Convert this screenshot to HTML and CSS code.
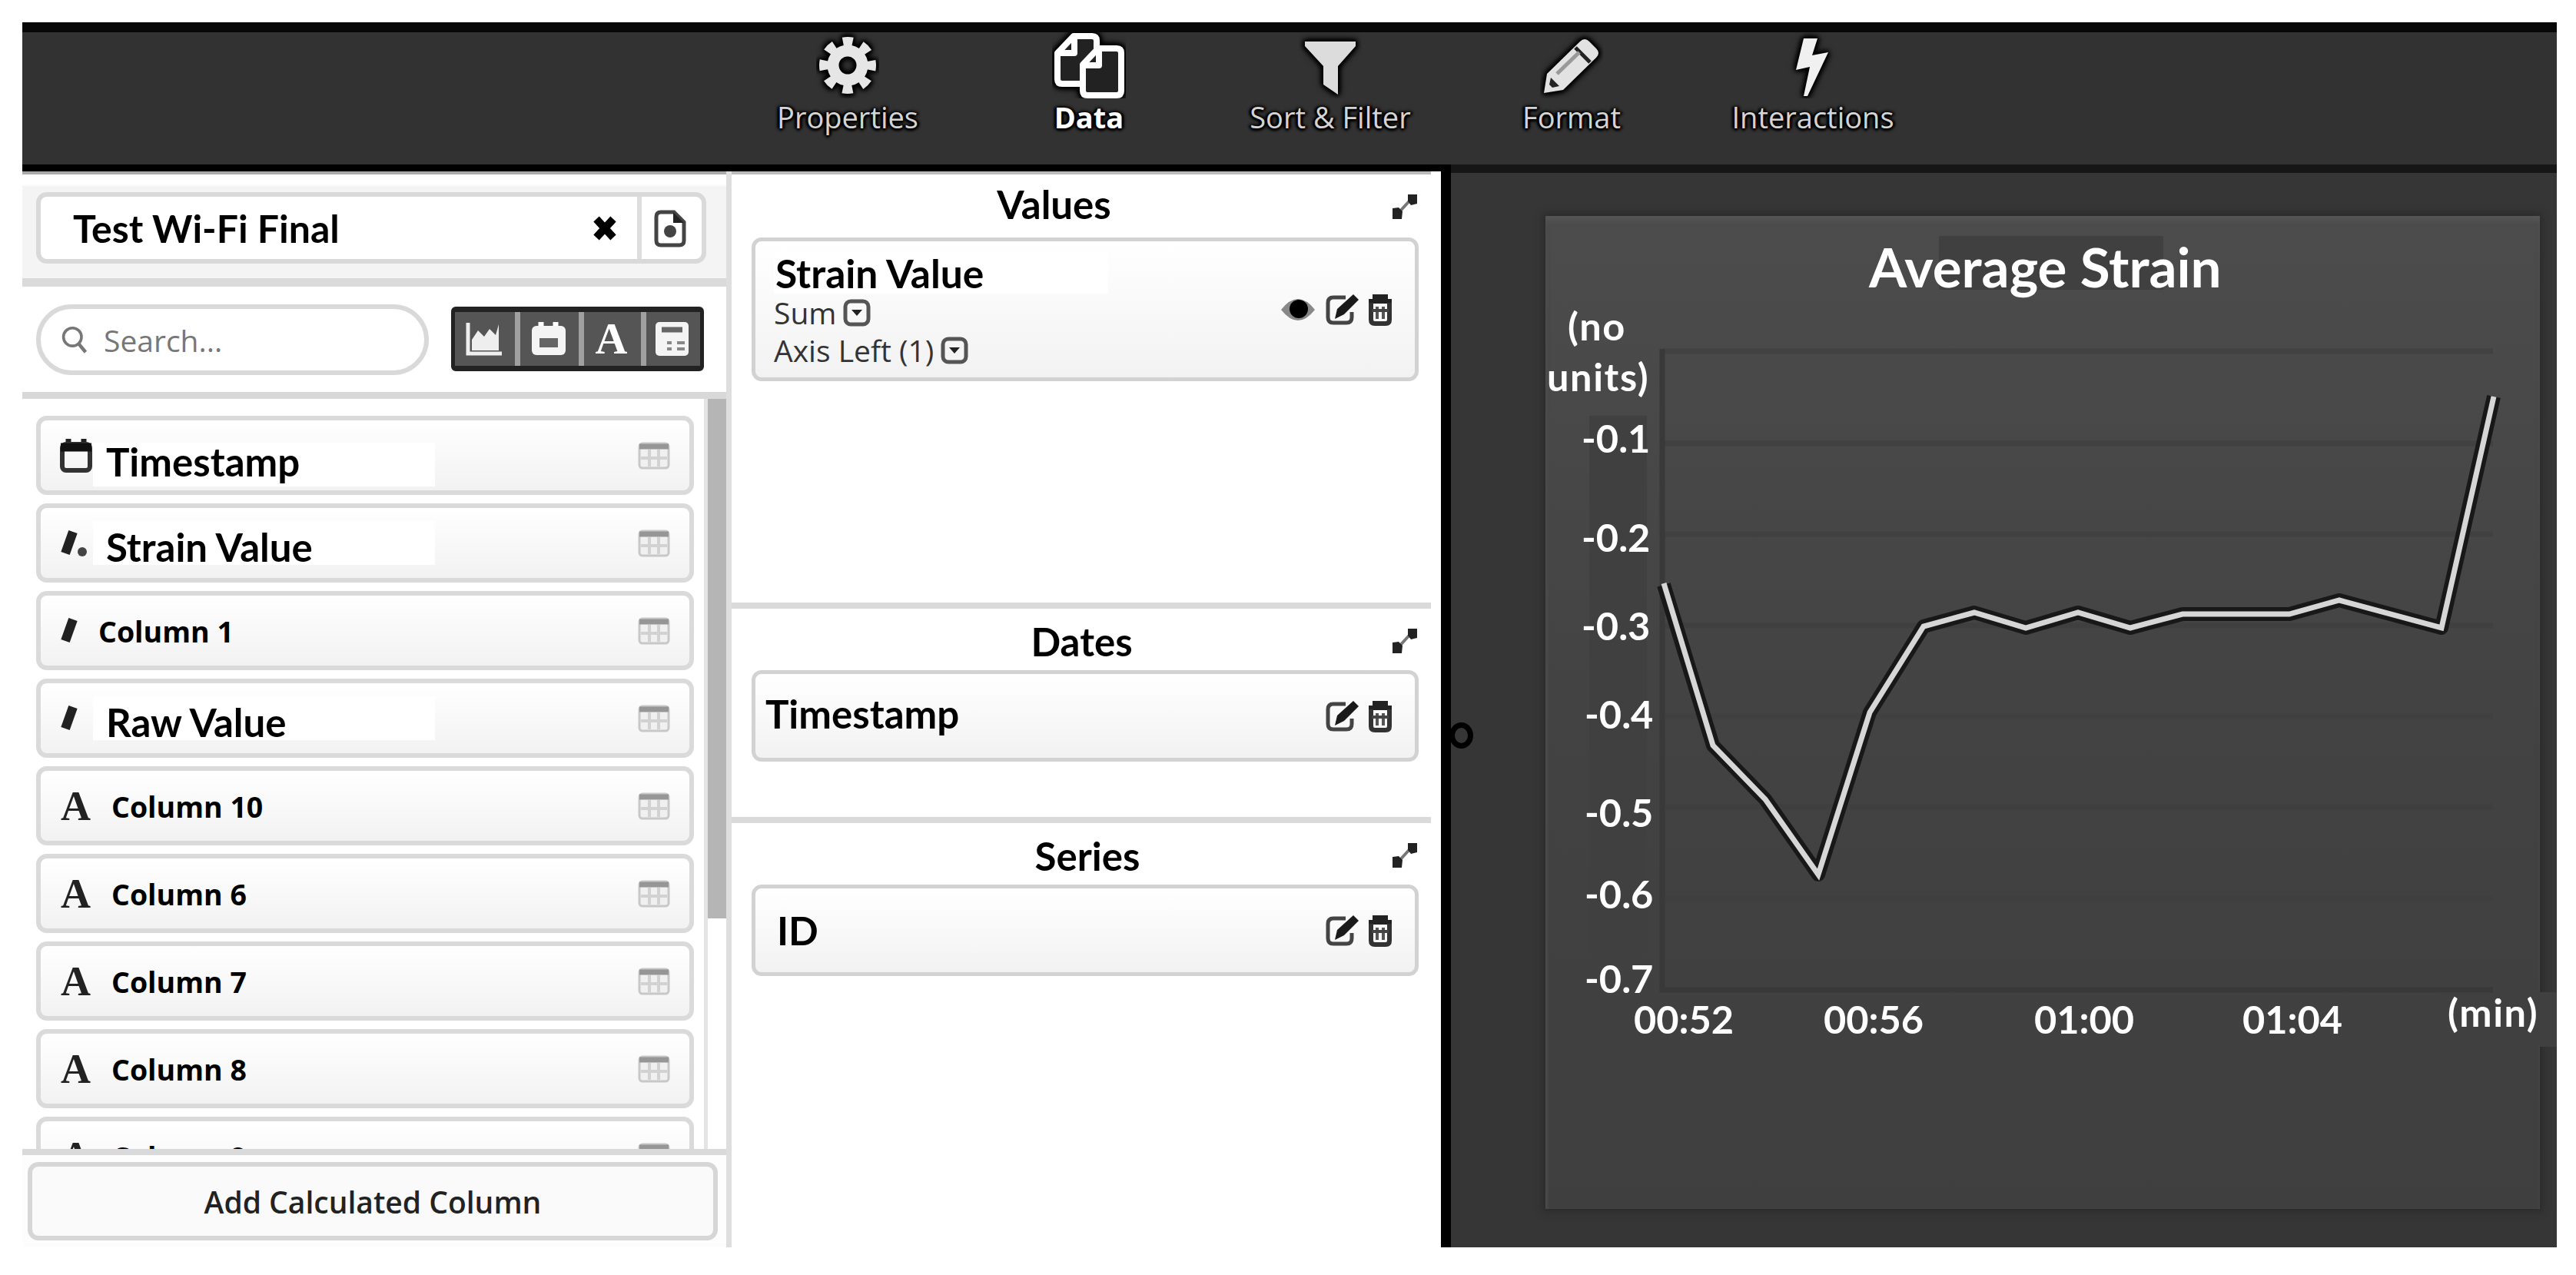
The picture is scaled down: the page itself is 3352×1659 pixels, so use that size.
FILE: index.html
```
<!DOCTYPE html>
<html lang="en">
<head>
    <meta charset="UTF-8">
    <meta name="viewport" content="width=device-width, initial-scale=1.0">
    <title>Average Strain</title>
    <link rel="stylesheet" href="styles.css">
</head>
<body>
    <!-- Shared icons -->
    <svg class="sprite" width="0" height="0">
        <symbol id="i-table" viewBox="0 0 42 36">
            <rect x="2" y="2" width="38" height="32" rx="4" fill="#f0f0f0" stroke="#c8c8c8" stroke-width="3"/>
            <path d="M2 6h38" stroke="#969696" stroke-width="7"/>
            <path d="M15 10v22M27 10v22M4 21h34" stroke="#d2d2d2" stroke-width="4"/>
        </symbol>
        <symbol id="i-calendar" viewBox="0 0 44 48">
            <path d="M12 2v10M32 2v10" stroke="#222" stroke-width="7"/>
            <rect x="4" y="9" width="36" height="34" rx="5" fill="none" stroke="#333" stroke-width="6"/>
            <path d="M2 13h40" stroke="#111" stroke-width="11"/>
        </symbol>
        <symbol id="i-expand" viewBox="0 0 36 38">
            <path d="M7 31L29 7" stroke="#777" stroke-width="4"/>
            <path d="M22 4h12v12l-8 2-4-5zM2 22l8-1 5 5-1 10H2z" fill="#222"/>
        </symbol>
        <symbol id="i-edit" viewBox="0 0 44 42">
            <path d="M27 5H11q-7 0-7 7v19q0 7 7 7h17q7 0 7-7v-7" fill="none" stroke="#444" stroke-width="5"/>
            <path d="M13 33l3-13L37 1l7 7-19 19z" fill="#1a1a1a"/>
        </symbol>
        <symbol id="i-trash" viewBox="0 0 32 42">
            <path d="M1 10h30M9 9V4h14v5" fill="none" stroke="#222" stroke-width="6"/>
            <path d="M4 12v22q0 5 5 5h14q5 0 5-5V12" fill="none" stroke="#333" stroke-width="6"/>
            <path d="M12 17v16M20 17v16" stroke="#555" stroke-width="4"/>
            <path d="M5 22h22" stroke="#444" stroke-width="4"/>
        </symbol>
        <symbol id="i-drop" viewBox="0 0 36 36">
            <rect x="3" y="3" width="30" height="30" rx="7" fill="none" stroke="#555" stroke-width="5"/>
            <path d="M11 14h14l-7 8z" fill="#222"/>
        </symbol>
    </svg>

    <div class="app">
        <nav class="toolbar">
            <a class="tool">
                <svg width="82" height="86" viewBox="0 0 82 86">
                    <g class="halo" fill="none" stroke="#e6e6e6">
                        <circle cx="41" cy="43" r="30" stroke-width="14" stroke-dasharray="12.2 11.36" stroke-dashoffset="6.1"/>
                        <circle cx="41" cy="43" r="19" stroke-width="15"/>
                    </g>
                </svg>
                <span>Properties</span>
            </a>
            <a class="tool active">
                <svg width="96" height="86" viewBox="0 0 96 86">
                    <g class="halo" fill="#222" stroke="#fff" stroke-width="8" stroke-linejoin="round">
                        <path d="M28 5h24q6 0 6 6v51q0 5-5 5H13q-6 0-6-6V27z"/>
                        <path d="M29 6v21H8" fill="none"/>
                        <path d="M60 21h24q6 0 6 6v49q0 6-6 6H46q-6 0-6-6V42z"/>
                        <path d="M61 22v21H41" fill="none"/>
                    </g>
                </svg>
                <span>Data</span>
            </a>
            <a class="tool">
                <svg width="82" height="86" viewBox="0 0 82 86">
                    <path class="halo" d="M8 12h66v6L51 44v37L32 68V44L8 18z" fill="#dcdcdc"/>
                </svg>
                <span>Sort &amp; Filter</span>
            </a>
            <a class="tool">
                <svg width="82" height="86" viewBox="0 0 82 86">
                    <g class="halo">
                        <path d="M5 79l4-25L52 12q6-6 12 0l9 9q6 6 0 12L30 75z" fill="#e2e2e2"/>
                        <path d="M46 20l19 19" stroke="#222" stroke-width="5"/>
                        <path d="M22 54l29-28" stroke="#999" stroke-width="5"/>
                        <path d="M14 59l11 11-9 2-4-4z" fill="#222"/>
                    </g>
                </svg>
                <span>Format</span>
            </a>
            <a class="tool">
                <svg width="82" height="86" viewBox="0 0 82 86">
                    <path class="halo" d="M29 8h18L40 30l21-4L34 83h-5l8-38-18 4z" fill="#f0f0f0"/>
                </svg>
                <span>Interactions</span>
            </a>
        </nav>

        <main class="main">
            <!-- Columns of the data source -->
            <section class="columns">
                <div class="source">
                    <div class="source-box">
                        <span class="source-name">Test Wi-Fi Final</span>
                        <svg class="clear" width="32" height="32" viewBox="0 0 32 32"><path d="M5 4l22 24M27 4L5 28" stroke="#000" stroke-width="10"/></svg>
                        <span class="source-file">
                            <svg width="44" height="50" viewBox="0 0 44 50">
                                <path d="M10 4h17l13 13v24q0 6-6 6H10q-6 0-6-6V10q0-6 6-6z" fill="none" stroke="#444" stroke-width="5"/>
                                <path d="M26 4v14h14z" fill="#222"/>
                                <circle cx="22" cy="29" r="8" fill="#444"/>
                            </svg>
                        </span>
                    </div>
                </div>
                <div class="filters">
                    <div class="search">
                        <svg width="36" height="42" viewBox="0 0 40 44"><circle cx="17" cy="18" r="13" fill="none" stroke="#777" stroke-width="4"/><path d="M26 28l10 12" stroke="#777" stroke-width="5"/></svg>
                        <span>Search...</span>
                    </div>
                    <div class="types">
                        <span><svg width="50" height="46" viewBox="0 0 50 46"><path d="M4 2v40h44" fill="none" stroke="#eee" stroke-width="5"/><path d="M9 38V24l8-12 8 8 7-10 8 8 4-14v34z" fill="#eee"/></svg></span>
                        <span><svg width="46" height="46" viewBox="0 0 46 46"><path d="M13 1v10M32 1v10" stroke="#fff" stroke-width="7"/><rect x="1" y="6" width="44" height="38" rx="6" fill="#f4f4f4"/><rect x="11" y="22" width="24" height="12" fill="#666"/></svg></span>
                        <span class="letter">A</span>
                        <span><svg width="44" height="46" viewBox="0 0 44 46"><rect x="0" y="1" width="43" height="44" rx="5" fill="#f4f4f4"/><path d="M8 11h27" stroke="#666" stroke-width="7"/><path d="M15 28h6M28 28h10M28 36h10M15 36h6" stroke="#888" stroke-width="4"/></svg></span>
                    </div>
                </div>
                <div class="list-wrap">
                    <div class="list">
                        <div class="item">
                            <svg class="item-icon" width="44" height="48"><use href="#i-calendar"/></svg>
                            <span class="name renamed first">Timestamp</span>
                            <svg class="item-table" width="42" height="36"><use href="#i-table"/></svg>
                        </div>
                        <div class="item">
                            <svg class="item-icon" width="44" height="36" viewBox="0 0 44 36"><path d="M18 3L8 31" stroke="#222" stroke-width="12"/><circle cx="30" cy="29" r="6" fill="#444"/></svg>
                            <span class="name renamed">Strain Value</span>
                            <svg class="item-table" width="42" height="36"><use href="#i-table"/></svg>
                        </div>
                        <div class="item">
                            <svg class="item-icon" width="44" height="36" viewBox="0 0 44 36"><path d="M18 3L8 31" stroke="#222" stroke-width="12"/></svg>
                            <span class="name number">Column 1</span>
                            <svg class="item-table" width="42" height="36"><use href="#i-table"/></svg>
                        </div>
                        <div class="item">
                            <svg class="item-icon" width="44" height="36" viewBox="0 0 44 36"><path d="M18 3L8 31" stroke="#222" stroke-width="12"/></svg>
                            <span class="name renamed">Raw Value</span>
                            <svg class="item-table" width="42" height="36"><use href="#i-table"/></svg>
                        </div>
                        <div class="item">
                            <span class="item-icon letter">A</span>
                            <span class="name">Column 10</span>
                            <svg class="item-table" width="42" height="36"><use href="#i-table"/></svg>
                        </div>
                        <div class="item">
                            <span class="item-icon letter">A</span>
                            <span class="name">Column 6</span>
                            <svg class="item-table" width="42" height="36"><use href="#i-table"/></svg>
                        </div>
                        <div class="item">
                            <span class="item-icon letter">A</span>
                            <span class="name">Column 7</span>
                            <svg class="item-table" width="42" height="36"><use href="#i-table"/></svg>
                        </div>
                        <div class="item">
                            <span class="item-icon letter">A</span>
                            <span class="name">Column 8</span>
                            <svg class="item-table" width="42" height="36"><use href="#i-table"/></svg>
                        </div>
                        <div class="item">
                            <span class="item-icon letter">A</span>
                            <span class="name">Column 9</span>
                            <svg class="item-table" width="42" height="36"><use href="#i-table"/></svg>
                        </div>
                    </div>
                    <div class="scroll"><div class="thumb"></div></div>
                </div>
                <div class="footer">
                    <button type="button" class="add">Add Calculated Column</button>
                </div>
            </section>

            <!-- Fields used by the chart -->
            <section class="fields">
                <div class="group values">
                    <div class="group-head">
                        <h2>Values</h2>
                        <svg width="36" height="38"><use href="#i-expand"/></svg>
                    </div>
                    <div class="card">
                        <div class="card-text">
                            <div class="field-name">Strain Value</div>
                            <div class="option">Sum <svg width="36" height="36"><use href="#i-drop"/></svg></div>
                            <div class="option">Axis Left (1) <svg width="36" height="36"><use href="#i-drop"/></svg></div>
                        </div>
                        <div class="actions">
                            <svg class="eye" width="46" height="32" viewBox="0 0 46 32"><path d="M1 16Q12 2 23 2t22 14Q34 30 23 30T1 16z" fill="#888"/><circle cx="24" cy="15" r="12" fill="#000"/></svg>
                            <svg width="44" height="42"><use href="#i-edit"/></svg>
                            <svg width="32" height="42"><use href="#i-trash"/></svg>
                        </div>
                    </div>
                </div>
                <div class="group dates">
                    <div class="group-head">
                        <h2>Dates</h2>
                        <svg width="36" height="38"><use href="#i-expand"/></svg>
                    </div>
                    <div class="card">
                        <div class="field-name">Timestamp</div>
                        <div class="actions">
                            <svg width="44" height="42"><use href="#i-edit"/></svg>
                            <svg width="32" height="42"><use href="#i-trash"/></svg>
                        </div>
                    </div>
                </div>
                <div class="group series">
                    <div class="group-head">
                        <h2>Series</h2>
                        <svg width="36" height="38"><use href="#i-expand"/></svg>
                    </div>
                    <div class="card">
                        <div class="field-name">ID</div>
                        <div class="actions">
                            <svg width="44" height="42"><use href="#i-edit"/></svg>
                            <svg width="32" height="42"><use href="#i-trash"/></svg>
                        </div>
                    </div>
                </div>
            </section>

            <!-- Chart -->
            <section class="preview">
                <div class="handle"></div>
                <div class="panel">
                    <svg class="chart" width="1294" height="1292" viewBox="0 0 1294 1292">
                        <rect class="patch" x="512" y="26" width="292" height="70"/>
                        <rect class="patch" x="57" y="260" width="75" height="700"/>
                        <rect class="patch" x="1160" y="1010" width="156" height="71"/>
                        <path class="grid" d="M153 176h1080M153 296h1080M153 414h1080M153 533h1080M153 651h1080M153 769h1080M153 889h1080"/>
                        <path class="axis" d="M152 173v834h1081"/>
                        <polyline class="line-edge" points="154,480 218,689 286,759 355,857 422,646 492,534 558,516 625,536 693,516 761,536 829,518 968,518 1033,500 1166,536 1234,235"/>
                        <polyline class="line" points="154,478 218,689 286,759 355,857 422,646 492,534 558,516 625,536 693,516 761,536 829,518 968,518 1033,500 1166,536 1234,235"/>
                        <text class="title" x="421" y="93">Average Strain</text>
                        <g class="labels">
                            <text class="unit" x="29" y="162">(no</text>
                            <text class="unit" x="2" y="228">units)</text>
                            <text x="47" y="308">-0.1</text>
                            <text x="47" y="437">-0.2</text>
                            <text x="47" y="552">-0.3</text>
                            <text x="51" y="667">-0.4</text>
                            <text x="51" y="795">-0.5</text>
                            <text x="51" y="901">-0.6</text>
                            <text x="51" y="1011">-0.7</text>
                            <text x="115" y="1064">00:52</text>
                            <text x="362" y="1064">00:56</text>
                            <text x="636" y="1064">01:00</text>
                            <text x="907" y="1064">01:04</text>
                            <text class="unit" x="1174" y="1055">(min)</text>
                        </g>
                    </svg>
                </div>
            </section>
        </main>
    </div>
</body>
</html>
```
FILE: styles.css
```
* {
    box-sizing: border-box;
}

body {
    margin: 0;
    padding: 29px 25px 36px 29px;
    background-color: #fff;
    font-family: "Open Sans", "Noto Sans", sans-serif;
    font-size: 39px;
    color: #000;
}

svg {
    display: block;
    flex: none;
}

.sprite {
    position: absolute;
}

.app {
    width: 3298px;
    height: 1594px;
    display: flex;
    flex-direction: column;
}

/* Toolbar */
.toolbar {
    height: 185px;
    flex: none;
    display: grid;
    grid-template-columns: repeat(5, 314px);
    padding-left: 917px;
    background-color: #323232;
    border-top: 13px solid #080808;
}

.tool {
    display: flex;
    flex-direction: column;
    align-items: center;
    line-height: 49px;
    font-size: 38px;
    color: #d4d4d4;
    text-shadow: 0 0 5px #000, 0 0 5px #000, 0 3px 3px #000, 3px 0 3px #000, -3px 0 3px #000;
}

.tool.active {
    color: #fff;
    font-weight: 700;
}

.halo {
    filter: drop-shadow(0 0 3px #000) drop-shadow(0 0 3px #000) drop-shadow(0 0 2px #000);
}

.main {
    flex: 1;
    min-height: 0;
    display: flex;
}

/* Left panel */
.columns {
    width: 923px;
    flex: none;
    display: flex;
    flex-direction: column;
    padding-right: 7px;
    background-color: #dedede;
    border-top: 9px solid #000;
}

.source {
    height: 150px;
    flex: none;
    padding: 23px 26px 0 18px;
    background: linear-gradient(#fff 13px, #f4f4f4 16px);
    border-top: 4px solid #aaa;
    border-bottom: 11px solid #dadada;
}

.source-box {
    height: 93px;
    display: flex;
    align-items: center;
    background-color: #fff;
    border: 6px solid #d9d9d9;
    border-radius: 14px;
}

.source-name {
    flex: 1;
    padding-left: 42px;
    font: 700 50px/60px Lato, "Open Sans", sans-serif;
}

.clear {
    margin-right: 26px;
}

.source-file {
    width: 84px;
    height: 81px;
    display: flex;
    align-items: center;
    justify-content: center;
    padding-right: 4px;
    border-left: 6px solid #dedede;
}

.filters {
    height: 146px;
    flex: none;
    display: flex;
    align-items: flex-start;
    justify-content: space-between;
    padding: 23px 29px 0 18px;
    background-color: #fff;
    border-bottom: 9px solid #d8d8d8;
}

.search {
    width: 511px;
    height: 92px;
    display: flex;
    align-items: center;
    gap: 20px;
    padding-left: 26px;
    border: 6px solid #d9d9d9;
    border-radius: 46px;
    color: #777;
}

.types {
    width: 329px;
    height: 84px;
    margin-top: 3px;
    display: grid;
    grid-template-columns: 78px 83px 81px 77px;
    background-color: #555;
    border: 7px solid #222;
    border-right-width: 5px;
    border-left-width: 5px;
    border-radius: 6px;
}

.types span {
    display: flex;
    align-items: center;
    justify-content: center;
    padding-right: 3px;
    color: #fff;
}

.types span + span {
    border-left: 7px solid #a0a0a0;
}

.letter {
    font-family: "Liberation Serif", serif;
    font-weight: 700;
    font-size: 58px;
    line-height: 70px;
}

.list-wrap {
    flex: 1;
    min-height: 0;
    display: flex;
    overflow: hidden;
    background-color: #fff;
}

.list {
    flex: 1;
    display: flex;
    flex-direction: column;
    gap: 11px;
    padding: 22px 13px 0 18px;
}

.item {
    height: 103px;
    flex: none;
    display: flex;
    align-items: center;
    padding: 0 25px 0 24px;
    background: linear-gradient(#fff, #f2f2f2);
    border: 6px solid #dadada;
    border-radius: 14px;
}

.item-icon {
    width: 44px;
}

.item-icon.letter {
    font-size: 54px;
    padding-left: 2px;
    color: #222;
}

.name {
    margin-left: 24px;
    padding-top: 2px;
    font-weight: 700;
    font-size: 37.5px;
}

.name.number {
    margin-left: 7px;
}

.name.renamed {
    width: 445px;
    height: 57px;
    margin-left: 0;
    padding: 0 0 0 17px;
    background-color: #fff;
    font: 700 51px/67px Lato, "Open Sans", sans-serif;
}

.name.renamed.first {
    margin-top: 23px;
    line-height: 49px;
}

.item-table {
    margin-left: auto;
}

.scroll {
    width: 29px;
    border-left: 5px solid #e4e4e4;
}

.thumb {
    height: 676px;
    background-color: #b5b5b5;
}

.footer {
    height: 128px;
    flex: none;
    padding: 9px 11px 0 7px;
    border-top: 8px solid #d9d9d9;
    background-color: #fdfdfd;
}

.add {
    display: block;
    width: 100%;
    height: 102px;
    background-color: #fafafa;
    border: 6px solid #d6d6d6;
    border-radius: 14px;
    font-family: inherit;
    font-weight: 600;
    font-size: 39px;
    color: #222;
}

/* Middle panel */
.fields {
    width: 936px;
    flex: none;
    display: flex;
    flex-direction: column;
    padding-right: 13px;
    border-top: 9px solid #000;
    border-right: 13px solid #000;
}

.group {
    padding-left: 26px;
    border-bottom: 8px solid #dadada;
}

.values {
    height: 569px;
    border-top: 4px solid #bbb;
}

.dates {
    height: 279px;
}

.series {
    border-bottom: none;
}

.group-head {
    height: 80px;
    display: flex;
    align-items: flex-start;
    padding: 0 16px 0 26px;
}

.values .group-head {
    height: 82px;
}

.group-head h2 {
    flex: 1;
    margin: 0;
    text-align: center;
    font: 700 51px/86px Lato, "Open Sans", sans-serif;
}

.group-head svg {
    margin-top: 22px;
}

.values h2 {
    padding-right: 71px;
    line-height: 78px;
}

.dates h2 {
    padding-left: 1px;
}

.series h2 {
    padding-left: 16px;
}

.card {
    width: 868px;
    height: 119px;
    display: flex;
    align-items: center;
    justify-content: space-between;
    padding: 0 29px 0 13px;
    background: linear-gradient(#fff, #f2f2f2);
    border: 5px solid #d2d2d2;
    border-radius: 13px;
}

.values .card {
    height: 187px;
    padding-left: 24px;
}

.series .card {
    padding-left: 28px;
}

.field-name {
    font: 700 51px/54px Lato, "Open Sans", sans-serif;
}

.dates .field-name {
    margin-bottom: 6px;
}

.values .field-name {
    width: 435px;
    margin-top: 3px;
    padding-left: 2px;
    background-color: #fff;
    font-size: 51.5px;
}

.option {
    display: flex;
    align-items: center;
    gap: 9px;
    line-height: 49px;
    color: #333;
}

.actions {
    display: flex;
    align-items: center;
    gap: 12px;
}

/* Chart */
.preview {
    flex: 1;
    position: relative;
    padding: 56px 22px 0 123px;
    background-color: #363636;
    border-top: 11px solid #161616;
}

.handle {
    position: absolute;
    left: -2px;
    top: 715px;
    width: 31px;
    height: 34px;
    border: 7px solid #000;
    border-radius: 50%;
}

.panel {
    height: 1292px;
    background: linear-gradient(#4c4c4c, #424242 55%, #3f3f3f);
    box-shadow: 0 0 9px 3px #2a2a2a, inset 0 8px 6px -2px #555, inset 4px 0 4px -1px #4c4c4c;
}

.chart {
    overflow: visible;
}

.patch {
    fill: #404040;
}

.grid {
    stroke: #3f3f3f;
    stroke-width: 7;
    opacity: 0.7;
}

.axis {
    fill: none;
    stroke: #393939;
    stroke-width: 7;
}

.line-edge {
    fill: none;
    stroke: #181818;
    stroke-width: 18;
    stroke-linejoin: round;
}

.line {
    fill: none;
    stroke: #d6d6d6;
    stroke-width: 7;
}

.title {
    fill: #fff;
    font: 700 71px Lato, "Open Sans", sans-serif;
}

.labels {
    fill: #fff;
    font: 700 50.5px Lato, "Open Sans", sans-serif;
}

.unit {
    letter-spacing: 1.6px;
}
```
